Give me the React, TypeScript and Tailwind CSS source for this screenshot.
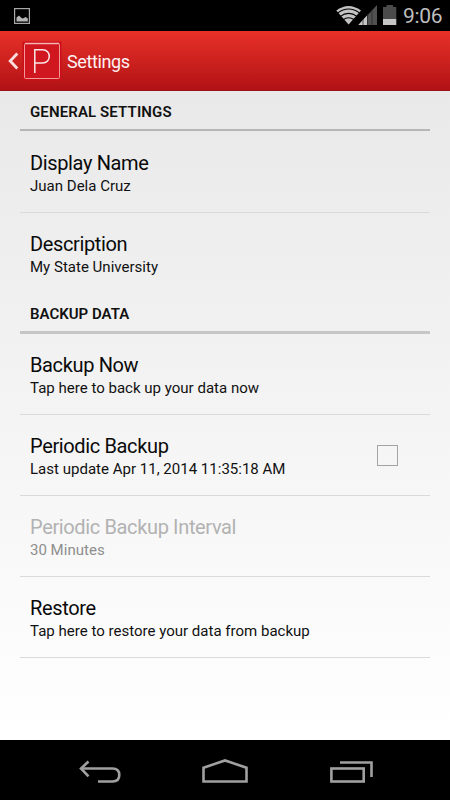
import React, { useState } from 'react';
import clsx from 'clsx';

interface PreferenceProps {
  title: string;
  summary: string;
  className?: string;
  disabled?: boolean;
  children?: React.ReactNode;
}

const SectionHeader: React.FC<{ children: React.ReactNode; className?: string }> = ({ children, className }) => (
  <h2 className={clsx('pl-[10px] leading-5 text-[15px] font-semibold text-[#111]', className)}>
    {children}
  </h2>
);

const Preference: React.FC<PreferenceProps> = ({ title, summary, className, disabled, children }) => (
  <div className={clsx('flex border-[#dadada] pl-[10px]', className)}>
    <div className="flex-1 whitespace-nowrap">
      <div className={clsx('text-[20px] leading-6 tracking-[-0.36px]', disabled ? 'text-[#b2b2b2]' : 'text-[#0a0a0a]')}>{title}</div>
      <div className={clsx('text-[15.04px] leading-[22px]', disabled ? 'text-[#8e8e8e]' : 'text-[#111]')}>{summary}</div>
    </div>
    {children}
  </div>
);

const StatusBar: React.FC = () => (
  <div className="flex h-[31px] justify-between bg-black">
    <svg className="ml-[14px] mt-2" width="16" height="16" viewBox="0 0 16 16">
      <rect x="0.6" y="0.6" width="14.8" height="14.8" fill="none" stroke="#a8a8a8" strokeWidth="1.2" />
      <path d="M2.5 13.5V9.5L5 7.5L7.5 10L9 10.5L11.5 9L13.8 10.5V13.5Z" fill="#b4b4b4" />
    </svg>
    <div className="flex">
      <svg width="62" height="31" viewBox="0 0 62 31">
        {/* wifi */}
        <path d="M1.3 10.5Q13.5 1.3 26 10.5L13.6 24.5Z" fill="#c3c3c3" />
        <g fill="none" stroke="#000" strokeWidth="1.1">
          <path d="M2.5 13.1Q13.6 5 24.8 13.1" />
          <path d="M5 16.6Q13.6 10.2 22.3 16.6" />
          <path d="M8 19.8Q13.6 15.8 19.3 19.8" />
        </g>
        {/* signal */}
        <path d="M23.3 25L42 5V25Z" fill="#505050" />
        <path d="M23.3 25L32 15.6V25Z" fill="#c6c6c6" />
        <path d="M28 19V25M32.5 14V25M37 9V25" stroke="#222" strokeWidth="0.7" />
        {/* battery */}
        <path d="M48 7H51.5V5H58V7H61.3V19H48Z" fill="#4b4b4b" />
        <rect x="48" y="19" width="13.3" height="6" fill="#c6c6c6" />
      </svg>
      <span className="w-[53px] pl-[6px] text-[21px] leading-[33px] tracking-[-0.3px] text-[#bebebe]">9:06</span>
    </div>
  </div>
);

const ActionBar: React.FC = () => (
  <header className="flex h-[60px] items-center border-b border-[#9e1114] bg-linear-to-b from-[#e93028] to-[#b11116]">
    <svg className="ml-2" width="12" height="20" viewBox="0 0 12 20">
      <path d="M9.3 2.5L2.2 10L9.3 17.5" fill="none" stroke="#fbdfdf" strokeWidth="2.8" />
    </svg>
    <svg className="ml-[2px]" width="40" height="40" viewBox="0 0 40 40">
      <rect x="0.5" y="0.5" width="39" height="39" rx="1" fill="#cb0f18" />
      <rect x="2.5" y="2.5" width="35" height="35" rx="1" fill="#d0171f" stroke="#f09a99" />
      <path d="M3 2.5H37" stroke="#f5b5b3" strokeWidth="1.4" />
      <path d="M12.8 32V8.8H20.5C29.5 8.8 29.5 22 20.5 22H12.8" fill="none" stroke="#fbe7e7" strokeWidth="1.5" />
    </svg>
    <h1 className="ml-[5px] pt-[2px] text-[18px] leading-6 tracking-[-0.4px] text-[#fff2f2]">Settings</h1>
  </header>
);

const NavigationBar: React.FC = () => (
  <nav className="flex h-[60px] bg-black">
    <svg width="450" height="60" viewBox="0 5 450 60" fill="none" stroke="#a0a0a0" strokeWidth="2.6">
      {/* back */}
      <path d="M81 33.5H112.5Q119.3 33.5 119.3 40Q119.3 46.5 112.5 46.5H98" />
      <path d="M88.5 26.5L81 33.5L88.5 41.3" />
      {/* home */}
      <path d="M203.5 32.8L225 25.4L246.5 32.8V46.5H203.5Z" />
      {/* recent apps */}
      <rect x="331.4" y="33.5" width="32.3" height="13" />
      <path d="M340 27.5H371.5V42" />
    </svg>
  </nav>
);

const App: React.FC = () => {
  const [periodic, setPeriodic] = useState(false);

  return (
    <div className="flex h-[800px] w-[450px] flex-col overflow-hidden bg-black font-[Roboto,sans-serif]">
      <StatusBar />
      <ActionBar />
      <main className="flex-1 bg-linear-to-b from-[#e9e9e9] to-white px-5">
        <SectionHeader className="h-[40px] border-b-2 border-[#b6b6b6] pt-[11px] tracking-[0.12px]">GENERAL SETTINGS</SectionHeader>
        <Preference className="h-[82px] border-b pt-[20px]" title="Display Name" summary="Juan Dela Cruz" />
        <Preference className="h-[81px] pt-[19px]" title="Description" summary="My State University" />
        <SectionHeader className="h-[40px] border-b-3 border-[#c6c6c6] pt-[10px]">BACKUP DATA</SectionHeader>
        <Preference className="h-[81px] border-b pt-[19px]" title="Backup Now" summary="Tap here to back up your data now" />
        <Preference className="h-[81px] border-b pt-[19px]" title="Periodic Backup" summary="Last update Apr 11, 2014 11:35:18 AM">
          <button
            role="checkbox"
            aria-checked={periodic}
            aria-label="Periodic Backup"
            onClick={() => setPeriodic(!periodic)}
            className={clsx('mr-8 mt-[11px] h-[21px] w-[21px] border border-[#a3a3a3]', periodic && 'bg-[#33b5e5]')}
          />
        </Preference>
        <Preference className="h-[81px] border-b pt-[19px]" title="Periodic Backup Interval" summary="30 Minutes" disabled={!periodic} />
        <Preference className="h-[81px] border-b pt-[19px]" title="Restore" summary="Tap here to restore your data from backup" />
      </main>
      <NavigationBar />
    </div>
  );
};

export default App;
